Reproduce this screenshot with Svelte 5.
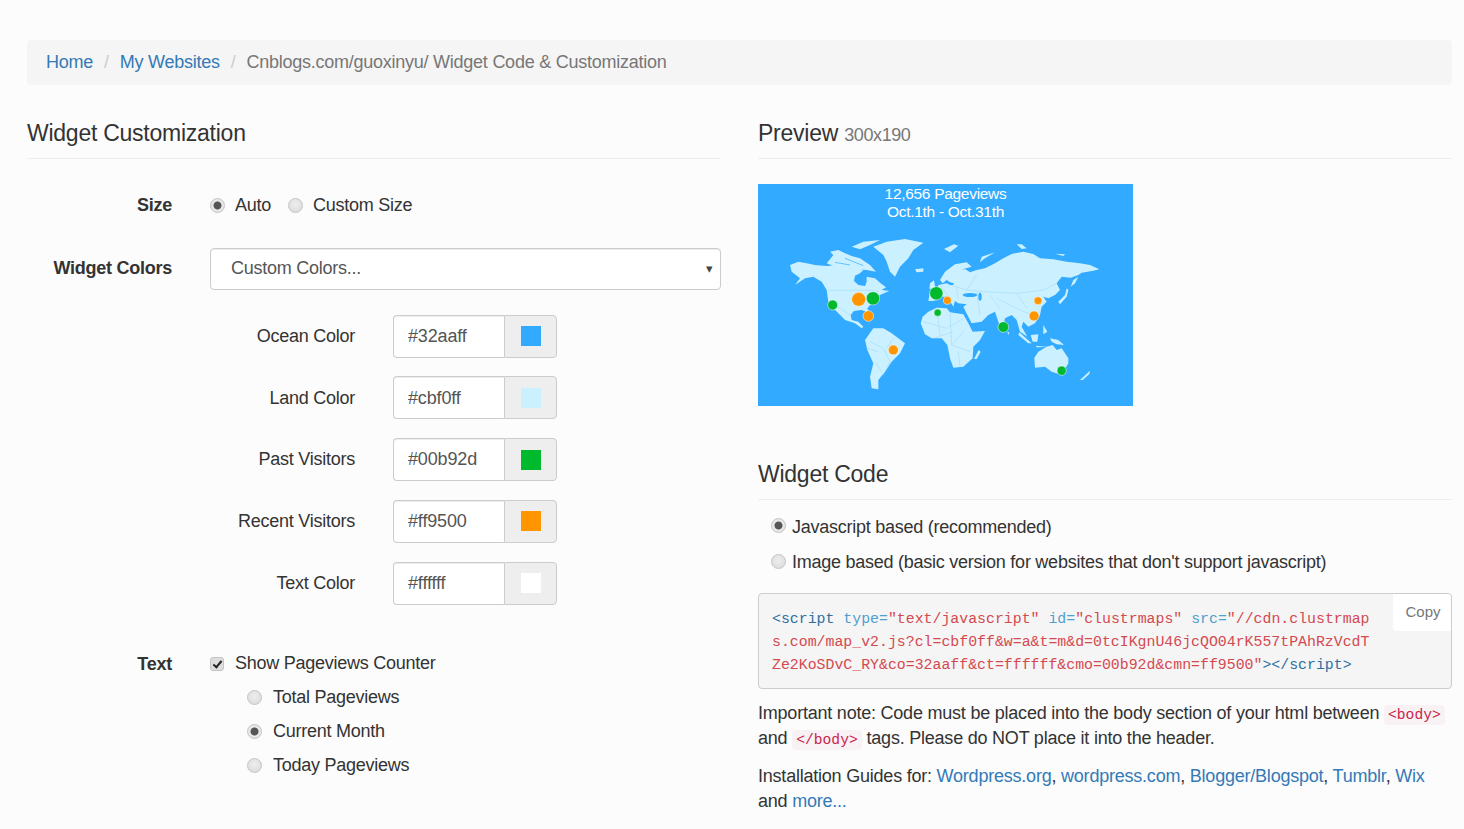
<script>
	const colors = [
		{ label: 'Ocean Color', value: '#32aaff' },
		{ label: 'Land Color', value: '#cbf0ff' },
		{ label: 'Past Visitors', value: '#00b92d' },
		{ label: 'Recent Visitors', value: '#ff9500' },
		{ label: 'Text Color', value: '#ffffff' }
	];

	// coordinates are on a 3x grid of the 375x222 map
	const land = [
		// north america
		'120,270 145,260 170,265 195,270 230,273 265,270 285,275 315,277 340,285 330,295 315,302 312,318 325,330 345,333 350,320 350,305 375,310 390,323 408,337 395,345 418,348 390,360 380,370 365,385 352,400 360,420 352,412 335,405 312,408 302,420 305,435 325,440 340,455 335,460 315,445 285,435 265,415 250,400 235,380 230,345 215,320 190,305 165,310 135,330 150,310 125,290',
		// arctic islands
		'230,265 250,240 240,230 265,225 285,235 305,243 330,250 360,270 378,290 350,285 320,283 290,278 255,275',
		'305,215 340,200 390,195 360,210 330,223',
		// greenland
		'370,215 410,200 465,192 520,203 490,225 475,250 450,275 435,305 420,290 410,260 400,240',
		'495,283 520,280 520,290 500,292',
		// south america
		'345,495 370,460 400,460 425,475 465,505 450,535 425,560 405,590 385,615 385,643 365,640 360,605 370,565 352,525',
		// eurasia
		'535,378 540,350 562,348 565,330 590,325 600,330 610,330 615,302 630,287 645,282 660,292 680,285 705,280 735,265 760,250 785,237 820,230 850,237 870,250 910,253 950,260 990,265 1020,270 1048,283 1030,287 995,293 985,300 962,308 935,305 920,325 930,345 915,360 895,370 880,365 890,380 875,395 870,420 855,445 835,455 820,440 815,455 832,485 810,470 800,435 785,420 765,430 757,470 745,440 735,410 715,420 695,440 665,445 648,412 640,395 650,388 625,385 615,378 610,395 600,378 590,365 575,365 560,375 548,378',
		// scandinavia
		'570,315 585,290 615,268 650,262 665,275 640,282 625,300 612,325 600,322 590,315 578,325',
		// africa
		'512,445 518,425 535,410 560,398 590,400 600,412 640,418 655,445 668,470 705,468 690,495 670,515 668,550 640,575 610,578 600,550 592,510 575,490 545,490 525,478',
		// australia
		'853,548 865,530 890,515 908,510 920,525 935,520 955,550 955,565 935,600 905,590 885,575 855,578',
		// smaller islands
		'990,615 1020,587 1018,597 998,615',
		'672,552 686,525 692,530 680,552',
		'540,325 552,316 556,340 538,342',
		'582,222 612,208 625,212 600,232',
		'690,262 695,245 735,232 705,250',
		'925,380 945,360 950,340 955,345 950,365 930,388',
		'962,335 970,315 985,305 975,325',
		'800,208 815,208 830,220 815,222',
		'808,472 845,505 835,505 805,480',
		'842,480 865,478 862,500 848,500',
		'858,512 895,516 860,517',
		'880,450 892,470 880,478',
		'900,490 925,495 942,510 920,508 905,500',
		'772,470 778,472 775,480',
		'915,236 945,238 940,243'
	];

	const borders = [
		'M235,346 H360 L385,350',
		'M255,390 L300,420',
		'M360,500 L400,520 L420,560 L400,600 M350,520 L385,530 M430,490 L410,520 M375,560 L395,590',
		'M520,440 L590,460 L640,430 M560,398 L570,480 M600,412 L605,510 M640,470 L605,510 L660,530 M550,490 L610,470 M630,575 L625,530',
		'M570,330 L600,370 M600,330 L650,345 L700,350 L800,355 L880,345 L920,325 M680,350 L690,420 M740,370 L800,400 L845,420 M680,300 L650,345 M800,355 L830,400 M620,340 L625,370 M720,360 L750,400'
	];

	const dots = [
		{ x: 326, y: 373, r: 21, c: '#ff9500' },
		{ x: 369, y: 370, r: 20, c: '#00b92d' },
		{ x: 248, y: 390, r: 15, c: '#00b92d' },
		{ x: 355, y: 423, r: 16, c: '#ff9500' },
		{ x: 430, y: 525, r: 15, c: '#ff9500' },
		{ x: 559, y: 355, r: 20, c: '#00b92d' },
		{ x: 592, y: 376, r: 12, c: '#ff9500' },
		{ x: 563, y: 413, r: 11, c: '#00b92d' },
		{ x: 760, y: 456, r: 16, c: '#00b92d' },
		{ x: 864, y: 377, r: 12, c: '#ff9500' },
		{ x: 852, y: 423, r: 15, c: '#ff9500' },
		{ x: 935, y: 587, r: 14, c: '#00b92d' }
	];
</script>

<main class="page">
	<nav class="crumbs">
		<a href="#home">Home</a><span class="sep">/</span><a href="#sites">My Websites</a><span class="sep">/</span><span class="current">Cnblogs.com/guoxinyu/ Widget Code &amp; Customization</span>
	</nav>

	<div class="cols">
		<section>
			<h3>Widget Customization</h3>

			<div class="row size-row">
				<span class="label">Size</span>
				<div class="opts">
					<label><input type="radio" name="size" checked />Auto</label>
					<label><input type="radio" name="size" />Custom Size</label>
				</div>
			</div>

			<div class="row select-row">
				<span class="label">Widget Colors</span>
				<div class="select">
					<select><option>Custom Colors...</option></select>
					<span class="caret">▾</span>
				</div>
			</div>

			<div class="row colors">
				<div></div>
				<div class="color-list">
					{#each colors as color}
						<div class="row">
							<span class="color-label">{color.label}</span>
							<div class="group">
								<input type="text" value={color.value} />
								<span class="addon"><i style="background:{color.value}"></i></span>
							</div>
						</div>
					{/each}
				</div>
			</div>

			<div class="row text-row">
				<span class="label">Text</span>
				<div class="text-opts">
					<label><input type="checkbox" checked />Show Pageviews Counter</label>
					<label class="sub"><input type="radio" name="count" />Total Pageviews</label>
					<label class="sub"><input type="radio" name="count" checked />Current Month</label>
					<label class="sub"><input type="radio" name="count" />Today Pageviews</label>
				</div>
			</div>
		</section>

		<section>
			<h3>Preview <small>300x190</small></h3>

			<div class="map">
				<div class="map-title">12,656 Pageviews<br />Oct.1th - Oct.31th</div>
				<svg viewBox="24 27 1125 666" width="375" height="222">
					{#each land as points}
						<polygon {points} fill="#cbf0ff" />
					{/each}
					<path d="M255,262 L300,270 M285,250 L340,272" fill="none" stroke="#32aaff" stroke-width="2" />
					<ellipse cx="660" cy="360" rx="22" ry="6" fill="#32aaff" />
					<ellipse cx="690" cy="365" rx="5" ry="12" fill="#32aaff" />
					{#each borders as d}
						<path {d} fill="none" stroke="#9fd6f3" stroke-width="1.5" />
					{/each}
					{#each dots as dot}
						<circle cx={dot.x} cy={dot.y} r={dot.r} fill={dot.c} stroke="#fff" stroke-width="1.5" />
					{/each}
				</svg>
			</div>

			<h3 class="code-title">Widget Code</h3>

			<div class="code-opts">
				<label><input type="radio" name="kind" checked />Javascript based (recommended)</label>
				<label><input type="radio" name="kind" />Image based (basic version for websites that don't support javascript)</label>
			</div>

			<div class="code">
				<button class="copy">Copy</button>
				<pre><div><span class="nt">&lt;script</span> <span class="na">type=</span><span class="s">"text/javascript"</span> <span class="na">id=</span><span class="s">"clustrmaps"</span> <span class="na">src=</span><span class="s">"//cdn.clustrmap</span></div><div class="s">s.com/map_v2.js?cl=cbf0ff&amp;w=a&amp;t=m&amp;d=0tcIKgnU46jcQO04rK557tPAhRzVcdT</div><div><span class="s">Ze2KoSDvC_RY&amp;co=32aaff&amp;ct=ffffff&amp;cmo=00b92d&amp;cmn=ff9500"</span><span class="nt">&gt;&lt;/script&gt;</span></div></pre>
			</div>

			<p class="note">Important note: Code must be placed into the body section of your html between <code>&lt;body&gt;</code> and <code>&lt;/body&gt;</code> tags. Please do NOT place it into the header.</p>
			<p class="note">Installation Guides for: <a href="#wp">Wordpress.org</a>, <a href="#wpc">wordpress.com</a>, <a href="#bl">Blogger/Blogspot</a>, <a href="#tu">Tumblr</a>, <a href="#wi">Wix</a> and <a href="#more">more...</a></p>
		</section>
	</div>
</main>

<style>
	:global(body) {
		background: #fcfcfc;
	}

	.page {
		padding: 40px 12px 0 27px;
		font: 18px/25.7px "Liberation Sans", Arial, sans-serif;
		color: #333;
		letter-spacing: -0.25px;
		height: 789px;
		overflow: hidden;
	}

	a {
		color: #337ab7;
		text-decoration: none;
	}

	.crumbs {
		background: #f5f5f5;
		border-radius: 4px;
		padding: 10px 19px 9px;
		margin-bottom: 35px;
	}

	.sep {
		color: #ccc;
		padding: 0 11px;
	}

	.current {
		color: #777;
	}

	.cols {
		display: grid;
		grid-template-columns: 694px 694px;
		gap: 37px;
	}

	h3 {
		margin: 0 0 25px;
		padding-bottom: 11px;
		border-bottom: 1px solid #eee;
		font-size: 23px;
		font-weight: 400;
		line-height: 27px;
		letter-spacing: -0.25px;
	}

	small {
		font-size: 18px;
		line-height: 1;
		color: #777;
		letter-spacing: -0.4px;
	}

	.row {
		display: grid;
		grid-template-columns: 145px 1fr;
		column-gap: 38px;
		align-items: center;
	}

	.label {
		text-align: right;
		font-weight: 700;
	}

	label {
		display: flex;
		align-items: center;
	}

	input[type='radio'],
	input[type='checkbox'] {
		appearance: none;
		flex: none;
		width: 15px;
		height: 15px;
		margin: 0 10px 0 0;
		border: 1px solid #c4c4c4;
		border-radius: 50%;
		background: radial-gradient(circle at 50% 40%, #eee, #d8d8d8);
	}

	input[type='radio']:checked {
		background: radial-gradient(circle, #555 0 3.5px, #ececec 4.5px, #d8d8d8);
	}

	input[type='checkbox'] {
		position: relative;
		width: 14px;
		height: 14px;
		margin-right: 11px;
		border-radius: 3px;
		background: #ddd;
	}

	input[type='checkbox']::after {
		content: '';
		position: absolute;
		left: 4px;
		top: 1px;
		width: 3px;
		height: 7px;
		border: solid #222;
		border-width: 0 2.5px 2.5px 0;
		transform: rotate(40deg);
	}

	.size-row {
		height: 26px;
		margin-top: 34px;
	}

	.opts {
		display: flex;
		gap: 17px;
	}

	.select-row {
		margin-top: 29px;
	}

	.select {
		position: relative;
	}

	select {
		display: block;
		appearance: none;
		width: 100%;
		height: 42px;
		padding: 0 20px;
		border: 1px solid #ccc;
		border-radius: 4px;
		background: #fff;
		font: inherit;
		letter-spacing: -0.25px;
		color: #555;
		box-shadow: inset 0 1px 1px rgba(0, 0, 0, 0.075);
	}

	.caret {
		position: absolute;
		right: 8px;
		top: 8px;
		font-size: 13px;
		color: #444;
	}

	.colors {
		margin-top: 25px;
		grid-template-columns: 0 1fr;
		column-gap: 0;
	}

	.color-list {
		display: grid;
		gap: 18.75px;
	}

	.color-list .row {
		grid-template-columns: 328px 1fr;
	}

	.color-label {
		text-align: right;
		padding-top: 1px;
	}

	.group {
		display: flex;
		width: 164px;
		height: 43px;
	}

	.group input {
		width: 111px;
		box-sizing: border-box;
		padding: 1px 14px 0;
		border: 1px solid #ccc;
		border-right: 0;
		border-radius: 4px 0 0 4px;
		background: #fff;
		font: inherit;
		letter-spacing: -0.15px;
		color: #555;
		box-shadow: inset 0 1px 1px rgba(0, 0, 0, 0.075);
	}

	.addon {
		display: flex;
		flex: 1;
		align-items: center;
		justify-content: center;
		border: 1px solid #ccc;
		border-radius: 0 4px 4px 0;
		background: #eee;
	}

	.addon i {
		width: 20px;
		height: 20px;
	}

	.text-row {
		margin-top: 46px;
		align-items: start;
	}

	.text-row .label {
		line-height: 26px;
	}

	.text-opts {
		display: grid;
		grid-auto-rows: 26px;
		row-gap: 8px;
	}

	.sub {
		padding-left: 37px;
	}

	.sub input {
		margin-right: 11px;
	}

	.map {
		position: relative;
		width: 375px;
		height: 222px;
		background: #32aaff;
	}

	.map svg {
		display: block;
		filter: blur(0.4px);
	}

	.map-title {
		position: absolute;
		inset: 1px 0 auto;
		text-align: center;
		color: #fff;
		font-size: 15.5px;
		line-height: 18.5px;
		letter-spacing: -0.3px;
		z-index: 1;
	}

	.code-title {
		margin-top: 55px;
		margin-bottom: 15px;
	}

	.code-opts {
		display: grid;
		row-gap: 10px;
		padding-left: 13px;
		margin-bottom: 17px;
	}

	.code-opts input {
		margin-right: 6px;
		transform: translateY(-2px);
	}

	.code {
		position: relative;
		box-sizing: border-box;
		height: 96px;
		padding: 14px 13px 0;
		margin-bottom: 12px;
		border: 1px solid #ccc;
		border-radius: 4px;
		background: #f5f5f5;
	}

	pre {
		margin: 0;
		font: 14.875px/23px "Liberation Mono", monospace;
		letter-spacing: 0;
	}

	.copy {
		position: absolute;
		top: 0;
		right: 0;
		width: 58px;
		height: 37px;
		padding: 0 0 2px 2px;
		border: 0;
		border-radius: 0 4px 0 4px;
		background: #fff;
		font: 15px "Liberation Sans", Arial, sans-serif;
		color: #777;
	}

	.nt {
		color: #2f6f9f;
	}

	.na {
		color: #4f9fcf;
	}

	.s {
		color: #d44950;
	}

	.note {
		margin: 0 0 13px;
		line-height: 25px;
		letter-spacing: -0.22px;
	}

	code {
		padding: 2px 4px;
		border-radius: 4px;
		background: #f9f2f4;
		color: #c7254e;
		font: 14.67px "Liberation Mono", monospace;
		letter-spacing: 0;
	}
</style>
